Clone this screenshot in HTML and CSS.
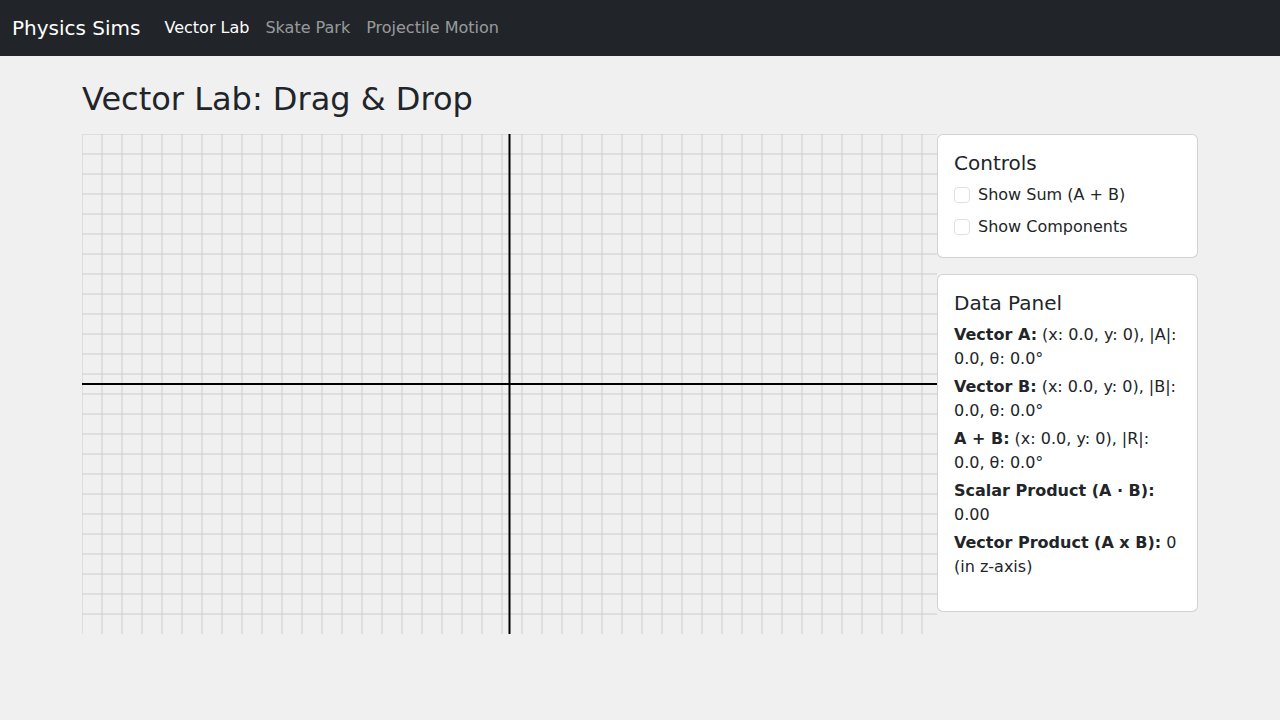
FILE: index.html
```html
<!DOCTYPE html>
<html lang="en">
<head>
<meta charset="utf-8">
<title>Physics Sims - Vector Lab</title>
<link rel="stylesheet" href="styles.css">
</head>
<body>
<nav class="navbar">
  <a class="brand" href="#">Physics Sims</a>
  <ul class="nav">
    <li><a class="nav-link active" href="#">Vector Lab</a></li>
    <li><a class="nav-link" href="#">Skate Park</a></li>
    <li><a class="nav-link" href="#">Projectile Motion</a></li>
  </ul>
</nav>
<main class="container">
  <h2 class="page-title">Vector Lab: Drag &amp; Drop</h2>
  <div class="layout">
    <div class="stage">
      <svg class="grid" width="855" height="500" viewBox="0 0 855 500" xmlns="http://www.w3.org/2000/svg">
        <path fill="none" stroke="#cccccc" stroke-width="1" d="M0 0V500M20 0V500M40 0V500M60 0V500M80 0V500M100 0V500M120 0V500M140 0V500M160 0V500M180 0V500M200 0V500M220 0V500M240 0V500M260 0V500M280 0V500M300 0V500M320 0V500M340 0V500M360 0V500M380 0V500M400 0V500M420 0V500M440 0V500M460 0V500M480 0V500M500 0V500M520 0V500M540 0V500M560 0V500M580 0V500M600 0V500M620 0V500M640 0V500M660 0V500M680 0V500M700 0V500M720 0V500M740 0V500M760 0V500M780 0V500M800 0V500M820 0V500M840 0V500M0 0H855M0 20H855M0 40H855M0 60H855M0 80H855M0 100H855M0 120H855M0 140H855M0 160H855M0 180H855M0 200H855M0 220H855M0 240H855M0 260H855M0 280H855M0 300H855M0 320H855M0 340H855M0 360H855M0 380H855M0 400H855M0 420H855M0 440H855M0 460H855M0 480H855"/>
        <path fill="none" stroke="#000000" stroke-width="2" d="M0 250H855M427.5 0V500"/>
      </svg>
    </div>
    <aside class="sidebar">
      <section class="card">
        <h5 class="card-title">Controls</h5>
        <label class="check"><input type="checkbox"><span>Show Sum (A + B)</span></label>
        <label class="check last"><input type="checkbox"><span>Show Components</span></label>
      </section>
      <section class="card">
        <h5 class="card-title">Data Panel</h5>
        <p class="data"><strong>Vector A:</strong> (x: 0.0, y: 0), |A|: 0.0, θ: 0.0°</p>
        <p class="data"><strong>Vector B:</strong> (x: 0.0, y: 0), |B|: 0.0, θ: 0.0°</p>
        <p class="data"><strong>A + B:</strong> (x: 0.0, y: 0), |R|: 0.0, θ: 0.0°</p>
        <p class="data"><strong>Scalar Product (A · B):</strong> 0.00</p>
        <p class="data last"><strong>Vector Product (A x B):</strong> 0 (in z-axis)</p>
      </section>
    </aside>
  </div>
</main>
</body>
</html>
```

FILE: styles.css
```css
* { box-sizing: border-box; }

body {
  margin: 0;
  background: #f0f0f0;
  color: #212529;
  font-family: "DejaVu Sans", sans-serif;
  font-size: 16px;
  line-height: 1.5;
}

.navbar {
  display: flex;
  align-items: center;
  height: 56px;
  padding: 8px 12px;
  background: #212529;
}

.brand {
  font-size: 20px;
  line-height: 30px;
  padding: 5px 0;
  margin-right: 16px;
  color: #ffffff;
  text-decoration: none;
}

.nav {
  display: flex;
  list-style: none;
  margin: 0;
  padding: 0;
}

.nav-link {
  display: block;
  padding: 8px;
  line-height: 24px;
  color: rgba(255, 255, 255, 0.55);
  text-decoration: none;
}

.nav-link.active { color: #ffffff; }

.container {
  width: 1140px;
  margin: 0 auto;
  padding: 0 12px;
}

.page-title {
  margin: 24px 0 16px;
  font-size: 32px;
  font-weight: 500;
  line-height: 1.2;
}

.layout {
  display: flex;
  align-items: flex-start;
}

.stage {
  flex: 0 0 855px;
  height: 500px;
}

.grid { display: block; }

.sidebar {
  flex: 1;
  display: flex;
  flex-direction: column;
  gap: 16px;
}

.card {
  background: #ffffff;
  border: 1px solid rgba(0, 0, 0, 0.175);
  border-radius: 6px;
  padding: 16px;
}

.card-title {
  margin: 0 0 8px;
  font-size: 20px;
  font-weight: 500;
  line-height: 24px;
}

.check {
  display: flex;
  align-items: flex-start;
  gap: 8px;
  margin-bottom: 8px;
  line-height: 24px;
}

.check.last { margin-bottom: 2px; }

.check input {
  appearance: none;
  -webkit-appearance: none;
  width: 16px;
  height: 16px;
  margin: 4px 0 0;
  border: 1px solid #dee2e6;
  border-radius: 4px;
  background: #ffffff;
  flex: 0 0 16px;
}

.data {
  margin: 0 0 4px;
}

.data.last { margin-bottom: 16px; }
```
